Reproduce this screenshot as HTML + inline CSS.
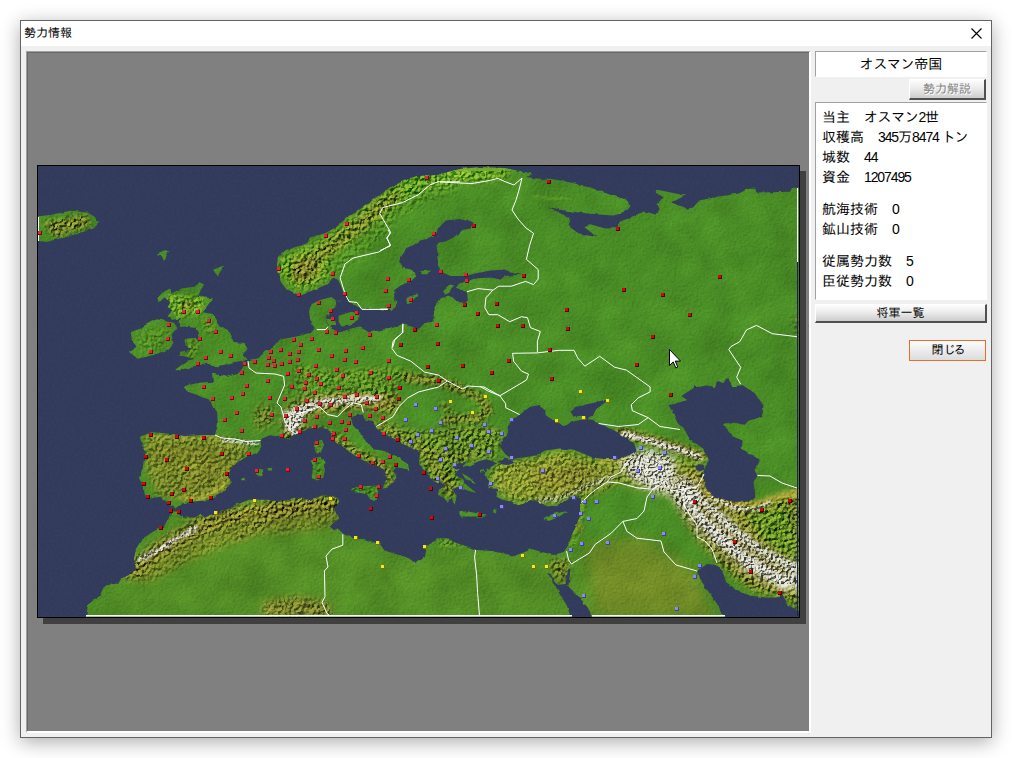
<!DOCTYPE html>
<html lang="ja"><head><meta charset="utf-8"><title>勢力情報</title>
<style>
html,body{margin:0;padding:0;background:#fff;}
body{width:1012px;height:758px;overflow:hidden;position:relative;font-family:"Liberation Sans","IPAGothic",sans-serif;color:#000;}
.abs{position:absolute;}
#win{left:20px;top:20px;width:970px;height:716px;border:1px solid #646464;background:#f0f0f0;box-shadow:0 4px 18px rgba(0,0,0,.33);}
#tbar{left:21px;top:21px;width:970px;height:25px;background:#fff;}
#ttl{left:24px;top:25px;font-size:12px;line-height:16px;white-space:nowrap;}
#panel{left:26px;top:51px;width:785px;height:682px;background:#808080;border-top:1px solid #a0a0a0;border-left:1px solid #a0a0a0;border-right:2px solid #fff;border-bottom:2px solid #fff;box-sizing:border-box;box-shadow:inset 1px 1px 0 #696969;}
#mshadow{left:43px;top:171px;width:763px;height:453px;background:#404040;}
.sunk{background:#fff;border-top:1px solid #a0a0a0;border-left:1px solid #a0a0a0;border-right:1px solid #fff;border-bottom:1px solid #fff;box-sizing:border-box;}
#name{left:815px;top:51px;width:172px;height:26px;font-size:14px;line-height:24px;text-align:center;white-space:nowrap;}
#info{left:815px;top:102px;width:172px;height:198px;font-size:14px;white-space:nowrap;}
#info div{position:absolute;left:6px;height:20px;line-height:20px;margin-top:-1px;}
.k{letter-spacing:-0.4px;}
.tn{letter-spacing:-1.2px;margin-left:3px;}
.btn{box-sizing:border-box;font-size:12px;text-align:center;white-space:nowrap;background:linear-gradient(#fdfdfd,#ececec 45%,#cdcdcd);border-top:1px solid #fff;border-left:1px solid #fff;border-right:2px solid #505050;border-bottom:2px solid #505050;}
#b1{left:909px;top:79px;width:77px;height:21px;line-height:18px;color:#848484;text-shadow:1px 1px 0 #fff;}
#b2{left:815px;top:304px;width:172px;height:19px;line-height:16px;}
#b3{left:909px;top:340px;width:77px;height:21px;line-height:19px;border:1px solid #e0702e;background:linear-gradient(#fcfcfc,#ececec 50%,#dcdcdc);}
.n{letter-spacing:-1.1px;}
</style></head><body>
<div id="win" class="abs"></div>
<div id="tbar" class="abs"></div>
<div id="ttl" class="abs">勢力情報</div>
<svg class="abs" style="left:971px;top:28px" width="11" height="11" viewBox="0 0 11 11"><path d="M0.5 0.5 L10.5 10.5 M10.5 0.5 L0.5 10.5" stroke="#000" stroke-width="1.1" fill="none"/></svg>
<div id="panel" class="abs"></div>
<div id="mshadow" class="abs"></div>
<svg width="763" height="453" viewBox="37 165 763 453" style="position:absolute;left:37px;top:165px;display:block">
<defs>
<filter id="b1" x="-20%" y="-20%" width="140%" height="140%"><feGaussianBlur stdDeviation="0.8"/></filter>
<filter id="b2" x="-20%" y="-20%" width="140%" height="140%"><feGaussianBlur stdDeviation="2"/></filter>
<filter id="b4" x="-20%" y="-20%" width="140%" height="140%"><feGaussianBlur stdDeviation="4"/></filter>
<filter id="b7" x="-20%" y="-20%" width="140%" height="140%"><feGaussianBlur stdDeviation="7"/></filter>
<filter id="emb" x="0" y="0" width="100%" height="100%" color-interpolation-filters="sRGB"><feTurbulence type="fractalNoise" baseFrequency="0.3" numOctaves="3" seed="7" result="t"/><feDiffuseLighting in="t" surfaceScale="3.6" diffuseConstant="1" lighting-color="#b2b2b2" result="l"><feDistantLight azimuth="225" elevation="45"/></feDiffuseLighting><feGaussianBlur in="SourceAlpha" stdDeviation="3" result="m"/><feComposite in="l" in2="m" operator="in"/></filter>
<filter id="emb2" x="0" y="0" width="100%" height="100%" color-interpolation-filters="sRGB"><feTurbulence type="fractalNoise" baseFrequency="0.4" numOctaves="2" seed="21" result="t"/><feDiffuseLighting in="t" surfaceScale="5" diffuseConstant="1" lighting-color="#b5b5b5" result="l"><feDistantLight azimuth="225" elevation="45"/></feDiffuseLighting><feGaussianBlur in="SourceAlpha" stdDeviation="1.5" result="m"/><feComposite in="l" in2="m" operator="in"/></filter>
<filter id="disp" filterUnits="userSpaceOnUse" x="27" y="155" width="790" height="480"><feTurbulence type="fractalNoise" baseFrequency="0.13" numOctaves="2" seed="5" result="n"/><feDisplacementMap in="SourceGraphic" in2="n" scale="3.2" xChannelSelector="R" yChannelSelector="G"/></filter>
<filter id="lf" x="0" y="0" width="100%" height="100%" color-interpolation-filters="sRGB"><feTurbulence type="fractalNoise" baseFrequency="0.03" numOctaves="3" seed="9" result="n"/><feColorMatrix in="n" type="matrix" values="1.3 0 0 0 -0.15  1.3 0 0 0 -0.15  1.3 0 0 0 -0.15  0 0 0 0 1"/></filter>
<filter id="embs" x="0" y="0" width="100%" height="100%" color-interpolation-filters="sRGB"><feTurbulence type="fractalNoise" baseFrequency="0.45" numOctaves="2" seed="11" result="t"/><feDiffuseLighting in="t" surfaceScale="1.6" diffuseConstant="1" lighting-color="#b5b5b5" result="l"><feDistantLight azimuth="225" elevation="45"/></feDiffuseLighting><feComposite in="l" in2="SourceAlpha" operator="in"/></filter>
<filter id="seatex" x="0" y="0" width="100%" height="100%"><feTurbulence type="fractalNoise" baseFrequency="0.4" numOctaves="2" seed="3" result="n"/><feColorMatrix in="n" type="matrix" values="0 0 0 0 1  0 0 0 0 1  0 0 0 0 1  1.2 0 0 0 -0.45"/></filter>
<clipPath id="landclip">
<polygon points="440.0,174.0 459.8,169.0 479.6,167.0 505.0,168.0 525.0,172.0 533.0,174.0 527.0,176.9 539.0,178.8 550.8,178.8 566.6,181.8 590.3,186.8 610.0,194.7 626.0,199.6 631.0,205.6 626.0,211.5 614.0,215.4 598.0,214.5 578.5,212.5 558.7,209.5 547.8,206.5 558.7,212.5 570.6,218.4 568.6,226.3 578.5,233.2 596.3,237.2 592.3,233.2 584.4,227.3 590.3,224.3 604.2,228.3 618.0,228.3 618.0,222.4 630.0,217.4 643.7,211.4 655.6,214.4 659.6,209.5 657.6,204.5 662.5,197.6 655.6,192.6 657.6,189.7 685.3,195.6 671.4,202.5 687.3,208.5 693.2,207.5 699.1,200.6 718.9,196.6 738.7,193.6 748.6,188.7 755.5,188.7 756.5,192.6 790.1,191.7 792.1,187.7 808.0,187.7 808.0,625.0 84.0,625.0 86.0,617.0 88.4,604.5 100.3,594.6 104.3,585.7 116.1,583.7 124.0,576.8 135.9,568.9 133.9,559.0 135.9,549.1 141.8,539.2 153.7,531.3 163.6,527.4 167.6,519.5 171.5,512.5 177.5,512.5 183.4,517.5 195.3,517.5 201.2,513.5 205.2,517.5 215.0,514.5 226.9,509.6 237.0,504.6 248.9,499.7 266.7,499.7 280.5,501.7 294.4,497.7 310.2,499.7 324.0,494.7 337.9,497.7 338.9,501.7 334.9,509.6 338.9,517.5 330.0,526.4 333.9,530.3 337.9,528.4 343.8,534.3 353.7,538.2 365.6,539.2 379.4,544.2 383.4,550.1 395.3,554.1 407.1,557.0 417.0,563.0 424.9,557.0 426.9,547.2 431.9,541.2 437.0,538.2 446.9,538.2 456.8,543.2 466.7,546.2 476.6,550.1 492.4,551.1 506.2,554.1 514.2,556.0 522.1,553.1 532.0,549.1 541.8,552.1 553.7,555.1 563.6,552.1 567.6,546.2 571.5,535.3 575.5,527.4 579.4,517.5 581.0,509.6 581.0,498.0 573.2,496.9 563.6,502.0 555.7,505.6 547.8,506.6 539.9,502.5 530.0,500.0 524.0,503.6 518.1,505.6 512.2,501.7 502.3,499.7 496.3,496.8 498.3,488.9 488.4,488.0 490.3,481.0 484.4,475.1 486.4,469.1 496.3,464.2 498.3,463.2 486.4,459.2 478.5,461.2 470.6,465.2 462.7,467.2 466.6,463.2 458.7,463.2 452.8,467.2 458.7,469.1 454.7,475.1 462.7,479.0 466.6,485.0 476.5,492.9 468.6,490.9 458.7,486.9 452.8,488.9 456.7,496.8 454.7,504.7 450.8,496.8 447.8,502.8 444.8,498.8 437.9,494.8 438.9,488.9 446.8,485.0 436.9,483.0 433.0,479.0 425.1,471.1 419.1,465.2 419.5,452.0 410.8,447.8 397.5,440.4 382.6,433.0 376.7,428.5 372.3,421.1 364.9,419.6 362.6,414.5 356.0,415.2 350.8,417.4 353.0,425.6 360.4,433.0 366.3,440.4 373.8,449.3 384.1,450.8 388.6,453.7 398.9,458.2 407.8,464.1 409.3,470.0 403.4,468.6 396.0,467.1 393.0,471.5 397.5,476.0 393.0,481.9 388.6,486.3 382.6,487.8 387.1,477.5 384.1,470.0 376.7,465.6 367.8,462.6 358.9,458.2 350.0,452.3 341.1,446.3 335.2,441.9 330.8,434.5 327.8,429.3 318.9,427.1 308.5,428.5 299.6,433.0 293.7,434.5 289.3,438.9 280.4,437.4 270.0,435.2 266.4,435.1 260.5,440.0 261.4,446.9 256.5,452.9 246.6,456.8 236.7,462.8 230.8,468.7 227.8,476.6 231.9,481.9 223.0,491.8 211.0,499.7 193.3,501.7 181.4,503.6 175.5,508.6 171.5,506.6 167.6,502.6 159.6,496.7 149.8,498.7 144.8,495.7 143.8,486.8 138.9,478.0 141.8,470.0 142.7,468.7 143.7,460.8 145.7,450.9 141.8,444.0 139.8,437.0 151.7,432.1 171.4,434.1 185.3,436.0 203.0,435.1 215.0,435.1 217.9,423.2 216.9,411.3 211.0,405.4 209.0,399.5 199.1,395.5 187.3,391.5 183.3,386.6 195.2,383.6 203.0,382.6 213.0,381.7 212.0,373.7 218.9,374.7 226.8,376.7 238.7,373.7 242.6,367.8 246.6,361.9 258.5,357.9 266.4,350.0 270.3,350.8 276.3,342.9 282.2,338.9 294.1,336.9 303.0,335.0 310.0,332.5 314.8,328.6 310.0,320.0 309.0,310.0 311.9,304.0 319.8,300.0 331.7,296.9 334.6,299.9 349.0,301.5 345.0,293.6 343.1,291.6 339.1,281.7 334.2,277.8 328.2,283.7 317.4,288.6 299.6,295.6 285.7,288.6 280.8,281.7 276.8,269.8 277.8,258.0 285.7,250.0 305.5,244.0 311.4,237.2 325.3,233.2 337.2,226.3 347.0,217.4 362.9,207.5 376.7,196.7 396.5,183.8 416.3,175.9 438.0,174.9"/>
<polygon points="30.0,217.0 50.0,215.0 60.0,213.0 71.0,210.7 80.0,211.5 88.0,212.7 95.0,217.0 99.0,221.7 95.0,226.0 91.7,229.0 80.0,233.0 68.6,236.6 58.0,239.0 48.0,242.0 30.0,240.0"/>
<polygon points="156.6,253.8 163.0,251.0 169.5,249.9 166.5,255.8 164.5,261.8 161.5,255.8"/>
<polygon points="213.0,269.7 222.9,265.7 220.9,271.7 217.9,276.6 215.0,272.6"/>
<polygon points="181.3,288.5 196.2,286.5 199.1,282.0 204.0,284.5 201.0,289.5 198.0,296.4 213.0,298.4 207.0,306.3 203.0,312.2 213.0,314.2 219.0,325.0 227.8,330.0 233.7,342.9 244.6,343.9 247.6,348.8 242.6,354.7 246.6,359.7 236.7,361.7 227.8,363.6 217.0,366.6 207.0,363.6 199.0,366.6 185.3,368.6 176.4,371.5 175.4,369.6 187.3,360.7 195.2,358.7 188.2,356.7 179.3,355.7 181.3,351.8 190.2,349.8 185.3,343.9 184.3,338.9 193.2,337.9 198.1,339.9 199.1,333.0 195.2,327.0 188.2,326.0 181.3,327.0 178.4,322.1 181.3,318.1 172.4,320.1 167.5,316.2 172.4,310.2 167.5,307.3 170.4,302.3 164.5,297.4 159.6,302.3 157.2,298.4 162.5,292.4 170.4,288.5 171.4,293.4"/>
<polygon points="154.6,319.1 165.5,321.1 173.4,323.1 177.4,329.0 171.4,333.0 173.4,342.9 167.5,349.8 154.6,354.7 137.8,358.7 128.9,351.8 136.8,346.8 131.9,340.9 130.9,332.0 138.8,329.0 143.7,325.1"/>
<polygon points="254.5,472.0 259.0,468.7 264.4,470.0 262.0,476.6 257.0,475.0"/>
<polygon points="267.4,468.0 272.3,467.7 272.0,470.7 268.0,470.5"/>
<polygon points="241.7,479.0 245.0,477.6 246.6,480.0 243.0,480.6"/>
<polygon points="314.5,441.9 321.9,439.7 324.1,444.8 321.1,452.3 317.4,454.5 313.7,449.3"/>
<polygon points="310.0,459.7 320.4,456.7 325.6,461.1 324.8,470.0 323.4,477.5 317.4,480.4 311.5,477.5 313.0,468.6"/>
<polygon points="350.8,489.3 358.9,486.3 379.7,485.6 378.2,492.3 376.7,499.7 370.8,499.7 364.9,493.7 354.5,492.3"/>
<polygon points="458.8,512.5 466.7,511.3 476.0,513.0 486.5,514.5 484.5,516.5 470.0,516.5 460.7,516.5"/>
<polygon points="493.0,510.0 495.5,509.5 495.0,513.5 493.5,513.0"/>
<polygon points="543.5,517.7 553.4,513.7 567.3,510.8 559.3,516.7 549.5,520.7 544.5,520.0"/>
<polygon points="338.6,315.7 351.4,311.8 359.3,313.7 359.3,319.7 349.5,325.6 341.5,326.6 338.6,321.7"/>
<polygon points="326.0,319.0 335.0,319.0 336.0,326.0 329.0,326.0"/>
<polygon points="420.4,271.1 429.8,270.4 427.5,274.3 422.7,274.3"/>
<polygon points="406.1,298.8 417.2,293.3 418.0,295.0 410.0,303.6 407.0,304.0"/>
<polygon points="389.5,309.1 395.8,299.6 396.6,302.8 391.9,311.5"/>
<polygon points="443.3,290.1 449.6,284.6 454.4,285.4 451.2,288.6 449.6,292.5 444.9,294.9"/>
<polygon points="545.3,408.7 557.2,409.7 570.2,410.9 573.2,416.8 581.1,415.8 587.0,418.8 575.2,420.8 563.3,425.7 557.4,421.8 549.5,417.8 545.5,414.8"/>
<polygon points="462.0,473.0 470.0,478.0 476.0,484.0 472.0,483.0 464.0,477.0"/>
<polygon points="480.0,470.0 484.0,469.0 484.0,472.0 480.0,472.5"/>
<polygon points="428.0,473.0 431.0,476.0 433.0,480.0 430.0,478.0"/>
</clipPath></defs>
<g filter="url(#disp)">
<rect x="27" y="155" width="790" height="480" fill="#323a5b"/>
<g clip-path="url(#landclip)">
<rect x="37" y="165" width="764" height="453" fill="#498c25"/>
<polygon points="86.0,617.0 120.0,570.0 160.0,525.0 240.0,505.0 340.0,500.0 345.0,540.0 440.0,545.0 560.0,555.0 600.0,560.0 700.0,575.0 720.0,617.0" fill="#5c8e26" filter="url(#b7)" opacity="0.55"/>
<polygon points="585.0,545.0 640.0,536.0 690.0,565.0 715.0,617.0 596.0,617.0" fill="#7c8828" filter="url(#b7)" opacity="0.7"/>
<polyline points="284.0,268.0 300.0,260.0 325.0,248.0 350.0,232.0 372.0,212.0 398.0,193.0 425.0,181.0 455.0,174.0 500.0,171.0" fill="none" stroke="#80b22c" stroke-width="18" stroke-linecap="round" stroke-linejoin="round" filter="url(#b4)" opacity="0.9"/>
<polygon points="282.0,258.0 300.0,250.0 322.0,246.0 332.0,262.0 326.0,280.0 306.0,290.0 290.0,286.0" fill="#80b22c" filter="url(#b4)" opacity="0.8"/>
<polyline points="296.0,274.0 312.0,262.0 335.0,245.0 360.0,226.0 380.0,208.0 398.0,196.0" fill="none" stroke="#7e8629" stroke-width="9" stroke-linecap="round" stroke-linejoin="round" filter="url(#b4)" opacity="0.95"/>
<polygon points="290.0,262.0 312.0,256.0 322.0,268.0 312.0,282.0 296.0,284.0" fill="#928a30" filter="url(#b4)" opacity="0.8"/>
<polyline points="335.0,268.0 352.0,252.0 375.0,236.0 392.0,214.0 420.0,196.0 450.0,186.0" fill="none" stroke="#5e9a26" stroke-width="14" stroke-linecap="round" stroke-linejoin="round" filter="url(#b4)" opacity="0.6"/>
<polyline points="300.0,270.0 318.0,256.0 340.0,240.0 362.0,222.0 384.0,204.0" fill="none" stroke="#7e8629" stroke-width="14" stroke-linecap="round" stroke-linejoin="round" filter="url(#b4)" opacity="0.5"/>
<polygon points="166.0,294.0 206.0,298.0 200.0,313.0 174.0,317.0" fill="#80b22c" filter="url(#b2)" opacity="0.85"/>
<polygon points="178.0,300.0 198.0,301.0 195.0,309.0 180.0,310.0" fill="#7e8629" filter="url(#b2)" opacity="0.6"/>
<polygon points="42.0,222.0 86.0,214.0 92.0,226.0 55.0,238.0" fill="#7e8629" filter="url(#b2)" opacity="0.85"/>
<polygon points="186.0,340.0 198.0,342.0 196.0,356.0 186.0,354.0" fill="#6e9c28" filter="url(#b2)" opacity="0.7"/>
<polygon points="200.0,318.0 212.0,320.0 216.0,334.0 206.0,334.0" fill="#6e9c28" filter="url(#b2)" opacity="0.5"/>
<polygon points="136.0,332.0 170.0,326.0 168.0,348.0 140.0,354.0" fill="#6e9c28" filter="url(#b2)" opacity="0.3"/>
<polygon points="144.0,436.0 215.0,437.0 252.0,446.0 240.0,466.0 228.0,488.0 200.0,499.0 158.0,497.0 146.0,470.0" fill="#808a2a" filter="url(#b4)" opacity="0.9"/>
<polyline points="160.0,452.0 200.0,454.0 215.0,470.0 190.0,482.0" fill="none" stroke="#8f8a2c" stroke-width="10" stroke-linecap="round" stroke-linejoin="round" filter="url(#b4)" opacity="0.6"/>
<polyline points="146.0,440.0 175.0,437.0 215.0,440.0 246.0,448.0" fill="none" stroke="#bcb23c" stroke-width="4" stroke-linecap="round" stroke-linejoin="round" filter="url(#b2)" opacity="0.5"/>
<polyline points="165.0,470.0 190.0,466.0 205.0,462.0" fill="none" stroke="#bcb23c" stroke-width="3" stroke-linecap="round" stroke-linejoin="round" filter="url(#b2)" opacity="0.5"/>
<polyline points="228.0,470.0 222.0,486.0 205.0,497.0 185.0,499.0" fill="none" stroke="#bcb23c" stroke-width="4" stroke-linecap="round" stroke-linejoin="round" filter="url(#b2)" opacity="0.6"/>
<polyline points="180.0,498.0 210.0,495.0 226.0,485.0" fill="none" stroke="#bcb23c" stroke-width="4" stroke-linecap="round" stroke-linejoin="round" filter="url(#b2)" opacity="0.8"/>
<polyline points="222.0,440.0 240.0,442.0 257.0,444.0" fill="none" stroke="#efefe6" stroke-width="3" stroke-linecap="round" stroke-linejoin="round" filter="url(#b1)" opacity="0.9"/>
<polyline points="150.0,436.0 200.0,438.0 218.0,438.0" fill="none" stroke="#bcb23c" stroke-width="4" stroke-linecap="round" stroke-linejoin="round" filter="url(#b2)" opacity="0.6"/>
<polygon points="254.0,408.0 272.0,404.0 272.0,426.0 256.0,430.0" fill="#7e8629" filter="url(#b4)" opacity="0.8"/>
<polyline points="296.0,368.0 330.0,378.0 360.0,374.0 390.0,370.0 410.0,376.0" fill="none" stroke="#6e9c28" stroke-width="7" stroke-linecap="round" stroke-linejoin="round" filter="url(#b4)" opacity="0.9"/>
<polyline points="355.0,380.0 385.0,392.0" fill="none" stroke="#6e9c28" stroke-width="5" stroke-linecap="round" stroke-linejoin="round" filter="url(#b4)" opacity="0.8"/>
<polyline points="285.0,385.0 290.0,400.0" fill="none" stroke="#6e9c28" stroke-width="5" stroke-linecap="round" stroke-linejoin="round" filter="url(#b4)" opacity="0.7"/>
<polygon points="300.0,366.0 340.0,372.0 380.0,368.0 400.0,372.0 398.0,392.0 370.0,398.0 340.0,394.0 305.0,398.0 292.0,390.0" fill="#6a9a28" filter="url(#b4)" opacity="0.6"/>
<polyline points="372.0,386.0 384.0,380.0 396.0,384.0 392.0,394.0 380.0,396.0" fill="none" stroke="#7e8629" stroke-width="3" stroke-linecap="round" stroke-linejoin="round" filter="url(#b2)" opacity="0.6"/>
<polyline points="292.0,434.0 290.0,420.0 298.0,410.0 315.0,405.0 335.0,402.0 355.0,399.0 372.0,400.0 390.0,404.0" fill="none" stroke="#928a30" stroke-width="19" stroke-linecap="round" stroke-linejoin="round" filter="url(#b4)" opacity="0.9"/>
<polygon points="285.0,412.0 297.0,407.0 305.0,412.0 301.0,426.0 297.0,435.0 288.0,433.0 284.0,422.0" fill="#efefe6" filter="url(#b2)" opacity="0.92"/>
<polyline points="298.0,410.0 310.0,405.0 325.0,402.0 340.0,401.0 355.0,399.0 368.0,398.0 378.0,398.0" fill="none" stroke="#efefe6" stroke-width="7" stroke-linecap="round" stroke-linejoin="round" filter="url(#b2)" opacity="0.95"/>
<polyline points="300.0,414.0 312.0,410.0" fill="none" stroke="#efefe6" stroke-width="4" stroke-linecap="round" stroke-linejoin="round" filter="url(#b1)" opacity="0.8"/>
<polyline points="305.0,430.0 322.0,432.0 340.0,440.0 356.0,452.0 372.0,460.0 386.0,470.0 390.0,482.0" fill="none" stroke="#7e8629" stroke-width="9" stroke-linecap="round" stroke-linejoin="round" filter="url(#b2)" opacity="0.85"/>
<polyline points="352.0,490.0 376.0,490.0" fill="none" stroke="#7e8629" stroke-width="6" stroke-linecap="round" stroke-linejoin="round" filter="url(#b2)" opacity="0.7"/>
<polyline points="317.0,445.0 318.0,452.0" fill="none" stroke="#7e8629" stroke-width="4" stroke-linecap="round" stroke-linejoin="round" filter="url(#b2)" opacity="0.7"/>
<polyline points="318.0,462.0 318.0,476.0" fill="none" stroke="#7e8629" stroke-width="5" stroke-linecap="round" stroke-linejoin="round" filter="url(#b2)" opacity="0.7"/>
<polygon points="375.0,420.0 395.0,425.0 420.0,432.0 445.0,428.0 470.0,426.0 500.0,430.0 505.0,440.0 495.0,452.0 500.0,460.0 480.0,458.0 465.0,462.0 455.0,470.0 462.0,480.0 455.0,495.0 445.0,498.0 435.0,485.0 422.0,468.0 418.0,452.0 400.0,442.0 380.0,432.0" fill="#86962e" filter="url(#b4)" opacity="0.6"/>
<polyline points="372.0,424.0 390.0,433.0 408.0,442.0 424.0,452.0 434.0,464.0 444.0,478.0 452.0,492.0" fill="none" stroke="#928a30" stroke-width="9" stroke-linecap="round" stroke-linejoin="round" filter="url(#b4)" opacity="0.6"/>
<polyline points="432.0,450.0 445.0,458.0 462.0,460.0 480.0,456.0" fill="none" stroke="#928a30" stroke-width="7" stroke-linecap="round" stroke-linejoin="round" filter="url(#b4)" opacity="0.55"/>
<polyline points="450.0,430.0 475.0,428.0 500.0,432.0" fill="none" stroke="#928a30" stroke-width="4" stroke-linecap="round" stroke-linejoin="round" filter="url(#b2)" opacity="0.5"/>
<polyline points="406.0,377.0 425.0,380.0 440.0,381.0 462.0,389.0 480.0,398.0 489.0,410.0 478.0,419.0 460.0,418.0 445.0,420.0" fill="none" stroke="#7e8629" stroke-width="9" stroke-linecap="round" stroke-linejoin="round" filter="url(#b2)" opacity="0.85"/>
<polyline points="412.0,380.0 435.0,382.0" fill="none" stroke="#bcb23c" stroke-width="4" stroke-linecap="round" stroke-linejoin="round" filter="url(#b2)" opacity="0.5"/>
<polyline points="442.0,404.0 450.0,412.0" fill="none" stroke="#7e8629" stroke-width="6" stroke-linecap="round" stroke-linejoin="round" filter="url(#b2)" opacity="0.7"/>
<polygon points="504.0,462.0 540.0,456.0 562.0,450.0 600.0,460.0 640.0,452.0 700.0,462.0 705.0,500.0 660.0,494.0 620.0,482.0 585.0,498.0 545.0,504.0 512.0,502.0 492.0,488.0 490.0,470.0" fill="#949c32" filter="url(#b4)" opacity="0.9"/>
<polygon points="530.0,470.0 580.0,466.0 600.0,474.0 570.0,488.0 535.0,488.0" fill="#928a30" filter="url(#b4)" opacity="0.6"/>
<polyline points="540.0,500.0 560.0,497.0 585.0,487.0 612.0,477.0" fill="none" stroke="#efefe6" stroke-width="4" stroke-linecap="round" stroke-linejoin="round" filter="url(#b2)" opacity="0.55"/>
<polygon points="620.0,456.0 650.0,450.0 672.0,456.0 680.0,478.0 676.0,494.0 655.0,492.0 636.0,482.0 622.0,470.0" fill="#efefe6" filter="url(#b4)" opacity="0.85"/>
<polygon points="634.0,462.0 660.0,460.0 668.0,480.0 650.0,484.0" fill="#efefe6" filter="url(#b2)" opacity="0.7"/>
<polyline points="600.0,462.0 625.0,458.0" fill="none" stroke="#bcb23c" stroke-width="5" stroke-linecap="round" stroke-linejoin="round" filter="url(#b2)" opacity="0.8"/>
<polyline points="620.0,432.0 650.0,440.0 680.0,449.0 702.0,457.0" fill="none" stroke="#928a30" stroke-width="11" stroke-linecap="round" stroke-linejoin="round" filter="url(#b2)" opacity="0.9"/>
<polyline points="624.0,434.0 650.0,441.0 680.0,450.0 700.0,457.0" fill="none" stroke="#efefe6" stroke-width="5" stroke-linecap="round" stroke-linejoin="round" filter="url(#b1)" opacity="0.95"/>
<polygon points="672.0,480.0 700.0,470.0 760.0,505.0 800.0,490.0 800.0,617.0 790.0,600.0 750.0,590.0 720.0,565.0 690.0,530.0 676.0,505.0" fill="#928a30" filter="url(#b4)" opacity="0.85"/>
<polyline points="683.0,490.0 700.0,510.0 725.0,535.0 755.0,560.0 790.0,578.0" fill="none" stroke="#efefe6" stroke-width="26" stroke-linecap="round" stroke-linejoin="round" filter="url(#b4)" opacity="0.8"/>
<polyline points="684.0,490.0 698.0,512.0 720.0,538.0 750.0,563.0 786.0,584.0" fill="none" stroke="#efefe6" stroke-width="8" stroke-linecap="round" stroke-linejoin="round" filter="url(#b2)" opacity="0.85"/>
<polyline points="696.0,496.0 716.0,516.0 742.0,538.0 772.0,556.0 796.0,566.0" fill="none" stroke="#efefe6" stroke-width="7" stroke-linecap="round" stroke-linejoin="round" filter="url(#b2)" opacity="0.8"/>
<polyline points="700.0,506.0 724.0,530.0 752.0,552.0 784.0,572.0" fill="none" stroke="#928a30" stroke-width="4" stroke-linecap="round" stroke-linejoin="round" filter="url(#b2)" opacity="0.7"/>
<polyline points="708.0,494.0 730.0,504.0 750.0,507.0 775.0,498.0 798.0,492.0" fill="none" stroke="#bcb23c" stroke-width="7" stroke-linecap="round" stroke-linejoin="round" filter="url(#b2)" opacity="0.9"/>
<polyline points="712.0,498.0 732.0,507.0 752.0,510.0 770.0,503.0" fill="none" stroke="#efefe6" stroke-width="4" stroke-linecap="round" stroke-linejoin="round" filter="url(#b1)" opacity="0.85"/>
<polygon points="745.0,515.0 790.0,505.0 798.0,560.0 770.0,545.0" fill="#6e9c28" filter="url(#b4)" opacity="0.8"/>
<polyline points="583.0,500.0 580.0,515.0 576.0,530.0 572.0,545.0" fill="none" stroke="#80b22c" stroke-width="5" stroke-linecap="round" stroke-linejoin="round" filter="url(#b2)" opacity="0.8"/>
<polyline points="578.0,522.0 582.0,534.0" fill="none" stroke="#928a30" stroke-width="4" stroke-linecap="round" stroke-linejoin="round" filter="url(#b2)" opacity="0.8"/>
<polygon points="548.0,560.0 570.0,558.0 567.0,584.0 556.0,580.0" fill="#7e8629" filter="url(#b2)" opacity="0.7"/>
<polygon points="438.0,538.0 460.0,540.0 462.0,548.0 440.0,548.0" fill="#6e9c28" filter="url(#b2)" opacity="0.5"/>
<polygon points="128.0,578.0 150.0,552.0 178.0,532.0 215.0,516.0 260.0,505.0 335.0,500.0 338.0,524.0 300.0,532.0 250.0,536.0 215.0,550.0 180.0,566.0 150.0,582.0" fill="#868a2c" filter="url(#b4)" opacity="0.7"/>
<polyline points="132.0,572.0 150.0,556.0 175.0,540.0 198.0,528.0 230.0,516.0 270.0,508.0 335.0,503.0" fill="none" stroke="#928a30" stroke-width="16" stroke-linecap="round" stroke-linejoin="round" filter="url(#b4)" opacity="0.8"/>
<polyline points="140.0,560.0 158.0,550.0 178.0,538.0 196.0,528.0" fill="none" stroke="#efefe6" stroke-width="4" stroke-linecap="round" stroke-linejoin="round" filter="url(#b1)" opacity="0.9"/>
<polyline points="237.0,538.0 262.0,522.0 290.0,512.0" fill="none" stroke="#928a30" stroke-width="7" stroke-linecap="round" stroke-linejoin="round" filter="url(#b4)" opacity="0.7"/>
<polyline points="180.0,515.0 205.0,520.0 225.0,514.0" fill="none" stroke="#7e8629" stroke-width="5" stroke-linecap="round" stroke-linejoin="round" filter="url(#b2)" opacity="0.6"/>
<polygon points="262.0,602.0 300.0,596.0 332.0,604.0 332.0,617.0 262.0,617.0" fill="#928a30" filter="url(#b4)" opacity="0.8"/>
<polyline points="796.0,318.0 798.0,335.0" fill="none" stroke="#7e8629" stroke-width="5" stroke-linecap="round" stroke-linejoin="round" filter="url(#b2)" opacity="0.7"/>
<polyline points="533.0,196.0 548.0,198.0 570.0,199.0" fill="none" stroke="#80b22c" stroke-width="2" stroke-linecap="round" stroke-linejoin="round" filter="url(#b1)" opacity="0.6"/>
<rect x="37" y="165" width="764" height="453" fill="#000" filter="url(#embs)" style="mix-blend-mode:overlay" opacity="0.17"/>
<rect x="27" y="155" width="790" height="480" filter="url(#lf)" style="mix-blend-mode:overlay" opacity="0.12"/>
<g filter="url(#emb)" style="mix-blend-mode:overlay" opacity="1"><polyline points="284.0,268.0 300.0,260.0 325.0,248.0 350.0,232.0 372.0,212.0 398.0,193.0 425.0,181.0 455.0,174.0 500.0,171.0" fill="none" stroke="#000" stroke-width="18" stroke-linecap="round" stroke-linejoin="round" opacity="1"/>
<polygon points="282.0,258.0 300.0,250.0 322.0,246.0 332.0,262.0 326.0,280.0 306.0,290.0 290.0,286.0" fill="#000" opacity="1"/>
<polyline points="335.0,268.0 352.0,252.0 375.0,236.0 392.0,214.0 420.0,196.0 450.0,186.0" fill="none" stroke="#000" stroke-width="14" stroke-linecap="round" stroke-linejoin="round" opacity="0.45"/>
<polygon points="166.0,294.0 206.0,298.0 200.0,313.0 174.0,317.0" fill="#000" opacity="1"/>
<polygon points="42.0,222.0 86.0,214.0 92.0,226.0 55.0,238.0" fill="#000" opacity="1"/>
<polygon points="186.0,340.0 198.0,342.0 196.0,356.0 186.0,354.0" fill="#000" opacity="0.7"/>
<polygon points="200.0,318.0 212.0,320.0 216.0,334.0 206.0,334.0" fill="#000" opacity="0.6"/>
<polygon points="136.0,332.0 170.0,326.0 168.0,348.0 140.0,354.0" fill="#000" opacity="0.4"/>
<polygon points="144.0,436.0 215.0,437.0 252.0,446.0 240.0,466.0 228.0,488.0 200.0,499.0 158.0,497.0 146.0,470.0" fill="#000" opacity="0.55"/>
<polyline points="146.0,440.0 175.0,437.0 215.0,440.0 246.0,448.0" fill="none" stroke="#000" stroke-width="4" stroke-linecap="round" stroke-linejoin="round" opacity="0.8"/>
<polyline points="165.0,470.0 190.0,466.0 205.0,462.0" fill="none" stroke="#000" stroke-width="3" stroke-linecap="round" stroke-linejoin="round" opacity="0.8"/>
<polyline points="228.0,470.0 222.0,486.0 205.0,497.0 185.0,499.0" fill="none" stroke="#000" stroke-width="4" stroke-linecap="round" stroke-linejoin="round" opacity="0.8"/>
<polygon points="254.0,408.0 272.0,404.0 272.0,426.0 256.0,430.0" fill="#000" opacity="0.8"/>
<polyline points="296.0,368.0 330.0,378.0 360.0,374.0 390.0,370.0 410.0,376.0" fill="none" stroke="#000" stroke-width="7" stroke-linecap="round" stroke-linejoin="round" opacity="0.7"/>
<polyline points="355.0,380.0 385.0,392.0" fill="none" stroke="#000" stroke-width="5" stroke-linecap="round" stroke-linejoin="round" opacity="0.6"/>
<polyline points="285.0,385.0 290.0,400.0" fill="none" stroke="#000" stroke-width="5" stroke-linecap="round" stroke-linejoin="round" opacity="0.6"/>
<polygon points="300.0,366.0 340.0,372.0 380.0,368.0 400.0,372.0 398.0,392.0 370.0,398.0 340.0,394.0 305.0,398.0 292.0,390.0" fill="#000" opacity="0.55"/>
<polyline points="372.0,386.0 384.0,380.0 396.0,384.0 392.0,394.0 380.0,396.0" fill="none" stroke="#000" stroke-width="3" stroke-linecap="round" stroke-linejoin="round" opacity="0.7"/>
<polyline points="292.0,434.0 290.0,420.0 298.0,410.0 315.0,405.0 335.0,402.0 355.0,399.0 372.0,400.0 390.0,404.0" fill="none" stroke="#000" stroke-width="19" stroke-linecap="round" stroke-linejoin="round" opacity="1"/>
<polyline points="305.0,430.0 322.0,432.0 340.0,440.0 356.0,452.0 372.0,460.0 386.0,470.0 390.0,482.0" fill="none" stroke="#000" stroke-width="9" stroke-linecap="round" stroke-linejoin="round" opacity="1"/>
<polyline points="352.0,490.0 376.0,490.0" fill="none" stroke="#000" stroke-width="6" stroke-linecap="round" stroke-linejoin="round" opacity="0.9"/>
<polyline points="317.0,445.0 318.0,452.0" fill="none" stroke="#000" stroke-width="4" stroke-linecap="round" stroke-linejoin="round" opacity="0.9"/>
<polyline points="318.0,462.0 318.0,476.0" fill="none" stroke="#000" stroke-width="5" stroke-linecap="round" stroke-linejoin="round" opacity="0.9"/>
<polygon points="375.0,420.0 395.0,425.0 420.0,432.0 445.0,428.0 470.0,426.0 500.0,430.0 505.0,440.0 495.0,452.0 500.0,460.0 480.0,458.0 465.0,462.0 455.0,470.0 462.0,480.0 455.0,495.0 445.0,498.0 435.0,485.0 422.0,468.0 418.0,452.0 400.0,442.0 380.0,432.0" fill="#000" opacity="0.9"/>
<polyline points="406.0,377.0 425.0,380.0 440.0,381.0 462.0,389.0 480.0,398.0 489.0,410.0 478.0,419.0 460.0,418.0 445.0,420.0" fill="none" stroke="#000" stroke-width="9" stroke-linecap="round" stroke-linejoin="round" opacity="1"/>
<polyline points="442.0,404.0 450.0,412.0" fill="none" stroke="#000" stroke-width="6" stroke-linecap="round" stroke-linejoin="round" opacity="0.8"/>
<polygon points="504.0,462.0 540.0,456.0 562.0,450.0 600.0,460.0 640.0,452.0 700.0,462.0 705.0,500.0 660.0,494.0 620.0,482.0 585.0,498.0 545.0,504.0 512.0,502.0 492.0,488.0 490.0,470.0" fill="#000" opacity="0.8"/>
<polyline points="620.0,432.0 650.0,440.0 680.0,449.0 702.0,457.0" fill="none" stroke="#000" stroke-width="11" stroke-linecap="round" stroke-linejoin="round" opacity="1"/>
<polygon points="672.0,480.0 700.0,470.0 760.0,505.0 800.0,490.0 800.0,617.0 790.0,600.0 750.0,590.0 720.0,565.0 690.0,530.0 676.0,505.0" fill="#000" opacity="1"/>
<polyline points="583.0,500.0 580.0,515.0 576.0,530.0 572.0,545.0" fill="none" stroke="#000" stroke-width="5" stroke-linecap="round" stroke-linejoin="round" opacity="0.9"/>
<polygon points="548.0,560.0 570.0,558.0 567.0,584.0 556.0,580.0" fill="#000" opacity="0.8"/>
<polygon points="438.0,538.0 460.0,540.0 462.0,548.0 440.0,548.0" fill="#000" opacity="0.7"/>
<polygon points="128.0,578.0 150.0,552.0 178.0,532.0 215.0,516.0 260.0,505.0 335.0,500.0 338.0,524.0 300.0,532.0 250.0,536.0 215.0,550.0 180.0,566.0 150.0,582.0" fill="#000" opacity="0.5"/>
<polyline points="132.0,572.0 150.0,556.0 175.0,540.0 198.0,528.0 230.0,516.0 270.0,508.0 335.0,503.0" fill="none" stroke="#000" stroke-width="16" stroke-linecap="round" stroke-linejoin="round" opacity="1"/>
<polyline points="237.0,538.0 262.0,522.0 290.0,512.0" fill="none" stroke="#000" stroke-width="7" stroke-linecap="round" stroke-linejoin="round" opacity="0.7"/>
<polyline points="180.0,515.0 205.0,520.0 225.0,514.0" fill="none" stroke="#000" stroke-width="5" stroke-linecap="round" stroke-linejoin="round" opacity="0.8"/>
<polygon points="262.0,602.0 300.0,596.0 332.0,604.0 332.0,617.0 262.0,617.0" fill="#000" opacity="0.7"/>
<polyline points="796.0,318.0 798.0,335.0" fill="none" stroke="#000" stroke-width="5" stroke-linecap="round" stroke-linejoin="round" opacity="0.7"/>
<polyline points="533.0,196.0 548.0,198.0 570.0,199.0" fill="none" stroke="#000" stroke-width="2" stroke-linecap="round" stroke-linejoin="round" opacity="0.5"/></g>
<g filter="url(#emb2)" style="mix-blend-mode:hard-light" opacity="0.75"><polyline points="222.0,440.0 240.0,442.0 257.0,444.0" fill="none" stroke="#000" stroke-width="5" stroke-linecap="round" stroke-linejoin="round"/>
<polygon points="285.0,412.0 297.0,407.0 305.0,412.0 301.0,426.0 297.0,435.0 288.0,433.0 284.0,422.0" fill="#000"/>
<polyline points="298.0,410.0 310.0,405.0 325.0,402.0 340.0,401.0 355.0,399.0 368.0,398.0 378.0,398.0" fill="none" stroke="#000" stroke-width="9" stroke-linecap="round" stroke-linejoin="round"/>
<polyline points="300.0,414.0 312.0,410.0" fill="none" stroke="#000" stroke-width="6" stroke-linecap="round" stroke-linejoin="round"/>
<polyline points="540.0,500.0 560.0,497.0 585.0,487.0 612.0,477.0" fill="none" stroke="#000" stroke-width="6" stroke-linecap="round" stroke-linejoin="round"/>
<polygon points="620.0,456.0 650.0,450.0 672.0,456.0 680.0,478.0 676.0,494.0 655.0,492.0 636.0,482.0 622.0,470.0" fill="#000"/>
<polygon points="634.0,462.0 660.0,460.0 668.0,480.0 650.0,484.0" fill="#000"/>
<polyline points="624.0,434.0 650.0,441.0 680.0,450.0 700.0,457.0" fill="none" stroke="#000" stroke-width="7" stroke-linecap="round" stroke-linejoin="round"/>
<polyline points="683.0,490.0 700.0,510.0 725.0,535.0 755.0,560.0 790.0,578.0" fill="none" stroke="#000" stroke-width="28" stroke-linecap="round" stroke-linejoin="round"/>
<polyline points="684.0,490.0 698.0,512.0 720.0,538.0 750.0,563.0 786.0,584.0" fill="none" stroke="#000" stroke-width="10" stroke-linecap="round" stroke-linejoin="round"/>
<polyline points="696.0,496.0 716.0,516.0 742.0,538.0 772.0,556.0 796.0,566.0" fill="none" stroke="#000" stroke-width="9" stroke-linecap="round" stroke-linejoin="round"/>
<polyline points="712.0,498.0 732.0,507.0 752.0,510.0 770.0,503.0" fill="none" stroke="#000" stroke-width="6" stroke-linecap="round" stroke-linejoin="round"/>
<polyline points="140.0,560.0 158.0,550.0 178.0,538.0 196.0,528.0" fill="none" stroke="#000" stroke-width="6" stroke-linecap="round" stroke-linejoin="round"/></g>
</g>
<polygon points="334.6,299.9 335.6,306.8 329.7,313.7 325.7,319.7 328.7,326.6 339.6,332.5 351.4,328.6 359.3,326.6 369.2,332.5 383.1,329.6 389.5,328.9 402.2,324.2 411.7,326.5 418.0,329.7 424.3,323.4 432.2,321.8 434.6,318.6 434.6,306.0 440.1,298.0 451.2,296.5 457.5,301.2 463.9,303.6 467.8,299.6 467.0,291.7 456.0,287.8 459.1,283.8 468.6,280.6 478.1,278.3 490.8,277.5 500.3,279.8 505.0,275.9 516.1,275.1 522.4,275.1 511.4,272.7 505.0,269.6 490.8,270.4 478.1,272.7 465.5,275.9 451.2,275.9 440.9,271.1 437.8,264.8 438.6,253.7 435.4,247.4 438.6,242.7 446.5,241.1 456.0,236.3 462.3,230.0 471.7,228.3 473.6,222.4 463.7,218.4 446.0,220.4 438.0,228.3 436.0,234.2 422.2,241.2 406.4,248.0 400.5,258.0 399.0,261.7 402.2,268.0 411.7,269.6 416.4,275.9 411.7,280.6 400.6,285.4 394.2,290.1 394.2,304.4 393.0,306.8 387.0,309.8 375.2,309.8 361.3,308.8 351.4,302.9 349.0,301.5" fill="#323a5b" />
<polygon points="500.0,446.5 505.9,455.4 511.9,459.3 521.8,457.4 535.6,455.4 545.5,450.4 559.3,448.5 573.2,449.5 583.1,453.4 593.0,457.4 606.8,459.3 618.7,458.4 630.6,454.4 636.5,450.4 634.5,444.5 626.6,438.6 616.7,431.7 606.8,426.7 596.9,422.7 587.0,418.8 575.2,420.8 563.3,425.7 557.4,421.8 549.5,417.8 545.5,414.8 555.4,410.9 551.4,408.9 544.5,408.9 539.6,404.9 529.7,406.9 519.8,414.8 509.9,421.8 507.9,431.7 504.0,437.6" fill="#323a5b" />
<polygon points="570.2,410.9 575.2,406.9 589.0,404.0 604.8,400.0 607.0,401.0 595.0,409.9 593.0,415.8 587.0,419.5 581.1,415.8 573.2,416.8" fill="#323a5b" />
<polygon points="499.0,461.0 505.0,458.5 512.0,460.5 514.0,463.0 508.0,465.0 500.0,464.0" fill="#323a5b" />
<polygon points="668.5,405.0 679.3,403.0 687.3,400.0 681.3,396.0 692.2,389.1 693.2,385.2 699.1,387.1 707.0,385.2 715.0,388.1 716.9,380.2 722.9,383.2 727.8,378.2 732.8,386.2 742.6,385.2 754.5,393.1 763.4,405.0 762.4,416.8 748.6,420.8 744.6,424.7 734.7,422.8 722.9,424.7 728.8,430.7 732.8,436.6 742.6,440.6 741.7,448.5 750.6,454.4 760.5,460.0 754.5,470.0 757.5,475.9 753.5,481.9 754.5,489.8 756.5,497.7 746.6,501.7 730.8,501.7 715.0,496.7 707.0,489.8 703.0,479.9 704.0,470.0 709.0,460.0 703.1,448.5 689.2,438.6 685.3,430.7 677.4,422.8 673.4,412.9" fill="#323a5b" />
<polygon points="697.2,570.9 707.0,564.0 716.9,565.0 722.9,572.9 726.8,582.8 736.7,589.7 748.6,595.6 766.4,597.6 776.3,597.6 782.2,594.6 788.1,604.5 797.0,610.5 808.0,614.0 808.0,626.0 729.0,626.0 724.8,618.0 718.9,606.5 709.0,592.6 701.1,580.8" fill="#323a5b" />
<polygon points="557.0,585.0 566.0,584.0 572.0,590.0 580.0,598.0 588.0,608.0 592.0,618.0 594.0,626.0 573.0,626.0 571.0,618.0 567.0,606.0 561.0,596.0 556.0,588.0" fill="#323a5b" />
<polygon points="548.3,573.2 550.5,574.0 554.5,581.0 558.0,585.5 556.5,588.0 552.0,581.5" fill="#323a5b" />
<polygon points="565.5,585.0 566.5,577.0 568.5,569.0 570.5,569.0 569.5,577.0 568.5,585.5" fill="#323a5b" />
<polygon points="695.0,466.5 699.0,464.5 703.5,465.0 705.0,469.0 700.0,471.5 696.5,470.0" fill="#323a5b" />
<polygon points="338.6,315.7 351.4,311.8 359.3,313.7 359.3,319.7 349.5,325.6 341.5,326.6 338.6,321.7" fill="#498c25" />
<polygon points="326.0,319.0 335.0,319.0 336.0,326.0 329.0,326.0" fill="#498c25" />
<polygon points="420.4,271.1 429.8,270.4 427.5,274.3 422.7,274.3" fill="#498c25" />
<polygon points="406.1,298.8 417.2,293.3 418.0,295.0 410.0,303.6 407.0,304.0" fill="#498c25" />
<polygon points="389.5,309.1 395.8,299.6 396.6,302.8 391.9,311.5" fill="#498c25" />
<polygon points="443.3,290.1 449.6,284.6 454.4,285.4 451.2,288.6 449.6,292.5 444.9,294.9" fill="#498c25" />
<polygon points="545.3,408.7 557.2,409.7 570.2,410.9 573.2,416.8 581.1,415.8 587.0,418.8 575.2,420.8 563.3,425.7 557.4,421.8 549.5,417.8 545.5,414.8" fill="#498c25" />
</g>
<rect x="37" y="165" width="764" height="453" fill="#fff" filter="url(#seatex)" opacity="0.04"/>
<g fill="none" stroke="#fff" stroke-width="1" stroke-linejoin="round">
<polyline points="460.0,181.8 438.0,181.8 430.0,184.8 418.3,194.7 402.4,202.6 382.7,207.5 379.7,213.5 390.6,232.3 386.6,238.2 390.6,245.1 378.7,252.0 353.0,258.0 345.0,263.9 340.1,277.8 345.0,293.6 349.0,301.5 357.0,302.5 361.9,309.4 387.6,309.4"/>
<polyline points="440.0,181.8 460.0,183.0 472.0,183.5 487.0,181.0 498.0,178.5 506.0,182.0 514.0,185.0 522.0,178.0"/>
<polyline points="522.0,178.0 519.0,190.0 516.0,200.0 512.0,210.0 518.0,219.0 526.0,228.0 533.5,233.2 529.5,245.8 526.4,259.3 538.2,269.6 538.2,279.1 533.5,284.6 525.6,281.4 511.4,286.2 498.7,286.2 493.1,290.1 478.1,288.6 467.0,291.7"/>
<polyline points="540.3,331.5 537.4,341.4 537.4,352.3"/>
<polyline points="492.9,290.0 485.9,297.9 484.9,307.8 488.9,314.7 497.8,314.7 509.7,321.7 521.5,316.7 527.5,317.7 530.4,327.6 540.3,331.5"/>
<polyline points="512.6,353.3 537.4,352.9 559.1,350.3 574.0,350.3 577.9,358.2 584.8,366.2 599.7,356.3 614.5,367.2 626.4,370.1 650.1,386.9 650.1,391.9 638.3,397.8 631.3,404.7 632.3,410.7 648.1,417.6 660.0,426.5 680.0,429.5"/>
<polyline points="648.1,417.6 638.3,424.5 618.5,426.5 598.7,423.5"/>
<polyline points="512.6,353.3 513.6,361.2 521.5,371.1 528.5,374.1 526.5,380.0 499.8,395.8 487.9,390.9 480.0,386.3"/>
<polyline points="499.8,395.8 505.7,403.7 505.7,407.7 519.6,414.6"/>
<polyline points="402.9,323.6 402.9,332.5 393.0,341.4 392.0,348.4 396.9,355.3 410.8,361.2 424.6,372.1 438.5,375.1 447.4,381.0 462.2,388.9 468.2,386.0 484.0,387.0 500.0,395.8"/>
<polyline points="447.4,381.0 438.5,387.0 418.7,391.9 407.8,397.8 398.9,406.7 393.0,416.6 383.1,422.5 376.2,426.5"/>
<polyline points="316.8,329.6 325.7,329.6 328.0,326.6"/>
<polyline points="248.0,361.0 249.0,368.0 256.0,373.0 275.0,374.0 283.6,376.3 284.6,385.0 277.0,403.0 281.0,407.0 283.0,414.0"/>
<polyline points="283.0,414.0 285.0,422.0 292.0,432.0 296.0,434.0"/>
<polyline points="283.0,414.0 290.0,415.0 300.0,413.0 310.0,410.0 319.8,406.7 327.7,414.6 337.6,416.6 345.5,408.7 353.4,402.8 361.3,404.7 363.3,412.7"/>
<polyline points="215.0,435.1 222.0,438.0 235.0,439.0 246.0,441.5 260.5,440.5"/>
<polyline points="342.8,534.3 342.8,545.2 332.0,549.1 326.0,556.0 328.0,567.0 324.4,570.9 325.0,596.6 322.0,602.5 327.0,613.4 330.0,616.0"/>
<polyline points="475.6,550.1 474.6,557.0 476.6,574.8 477.6,592.6 479.5,616.0"/>
<polyline points="566.6,551.1 568.6,560.0 571.5,564.0 579.4,559.0 589.3,553.1 595.3,544.2 611.1,533.3 622.9,521.4 637.0,518.5 644.0,511.0 647.0,497.0 653.0,489.0 666.0,481.0"/>
<polyline points="622.9,521.4 626.9,531.3 637.0,538.2 661.0,541.0 664.0,552.0 676.0,565.0 697.0,571.0"/>
<polyline points="581.4,502.6 589.3,494.7 595.3,489.8 607.1,481.9 619.0,482.9 637.0,487.8 650.0,489.0 653.0,489.0"/>
<polyline points="607.1,481.9 611.0,477.0 621.0,472.0 625.0,464.0 632.0,458.0"/>
<polyline points="740.7,384.2 736.7,377.3 740.7,367.4 728.8,349.6 730.8,346.6 739.7,341.7 746.6,329.8 756.5,325.4 772.3,333.7 797.0,336.7"/>
<polyline points="684.0,489.0 684.0,505.0 690.0,515.0 697.0,525.0 697.0,537.0 705.0,541.0 712.0,549.0 717.0,563.0"/>
<polyline points="666.0,481.0 671.0,491.0 684.0,489.0 697.0,487.0 701.0,480.0 704.0,474.0"/>
<polyline points="757.5,475.5 770.0,476.0 782.0,483.0 797.0,488.0"/>
<polyline points="380.0,309.1 387.9,309.1"/>
<polyline points="403.0,324.2 402.2,332.9 395.0,339.2 392.7,347.1"/>
<polyline points="387.9,230.0 390.3,233.2 387.1,237.9 390.3,245.8 380.0,250.6"/>
<polyline points="38.5,217.0 38.5,241.0"/>
<polyline points="797.5,188.0 797.5,262.0"/>
</g>
<rect x="86" y="615" width="486" height="1.5" fill="#fff"/><rect x="592" y="615" width="133" height="1.5" fill="#fff"/><rect x="797" y="262" width="1.2" height="354" fill="#1c2450"/>
<rect x="182" y="310" width="4" height="4" fill="#7a0814"/><rect x="182" y="310" width="3" height="3" fill="#e02834"/>
<rect x="196" y="310" width="4" height="4" fill="#7a0814"/><rect x="196" y="310" width="3" height="3" fill="#e02834"/>
<rect x="207" y="319" width="4" height="4" fill="#7a0814"/><rect x="207" y="319" width="3" height="3" fill="#e02834"/>
<rect x="214" y="330" width="4" height="4" fill="#7a0814"/><rect x="214" y="330" width="3" height="3" fill="#e02834"/>
<rect x="198" y="337" width="4" height="4" fill="#7a0814"/><rect x="198" y="337" width="3" height="3" fill="#e02834"/>
<rect x="167" y="323" width="4" height="4" fill="#7a0814"/><rect x="167" y="323" width="3" height="3" fill="#e02834"/>
<rect x="166" y="337" width="4" height="4" fill="#7a0814"/><rect x="166" y="337" width="3" height="3" fill="#e02834"/>
<rect x="149" y="350" width="4" height="4" fill="#7a0814"/><rect x="149" y="350" width="3" height="3" fill="#e02834"/>
<rect x="219" y="350" width="4" height="4" fill="#7a0814"/><rect x="219" y="350" width="3" height="3" fill="#e02834"/>
<rect x="229" y="354" width="4" height="4" fill="#7a0814"/><rect x="229" y="354" width="3" height="3" fill="#e02834"/>
<rect x="204" y="356" width="4" height="4" fill="#7a0814"/><rect x="204" y="356" width="3" height="3" fill="#e02834"/>
<rect x="196" y="362" width="4" height="4" fill="#7a0814"/><rect x="196" y="362" width="3" height="3" fill="#e02834"/>
<rect x="243" y="362" width="4" height="4" fill="#7a0814"/><rect x="243" y="362" width="3" height="3" fill="#e02834"/>
<rect x="240" y="371" width="4" height="4" fill="#7a0814"/><rect x="240" y="371" width="3" height="3" fill="#e02834"/>
<rect x="253" y="360" width="4" height="4" fill="#7a0814"/><rect x="253" y="360" width="3" height="3" fill="#e02834"/>
<rect x="269" y="350" width="4" height="4" fill="#7a0814"/><rect x="269" y="350" width="3" height="3" fill="#e02834"/>
<rect x="267" y="356" width="4" height="4" fill="#7a0814"/><rect x="267" y="356" width="3" height="3" fill="#e02834"/>
<rect x="266" y="363" width="4" height="4" fill="#7a0814"/><rect x="266" y="363" width="3" height="3" fill="#e02834"/>
<rect x="272" y="359" width="4" height="4" fill="#7a0814"/><rect x="272" y="359" width="3" height="3" fill="#e02834"/>
<rect x="273" y="364" width="4" height="4" fill="#7a0814"/><rect x="273" y="364" width="3" height="3" fill="#e02834"/>
<rect x="279" y="348" width="4" height="4" fill="#7a0814"/><rect x="279" y="348" width="3" height="3" fill="#e02834"/>
<rect x="280" y="362" width="4" height="4" fill="#7a0814"/><rect x="280" y="362" width="3" height="3" fill="#e02834"/>
<rect x="288" y="352" width="4" height="4" fill="#7a0814"/><rect x="288" y="352" width="3" height="3" fill="#e02834"/>
<rect x="288" y="360" width="4" height="4" fill="#7a0814"/><rect x="288" y="360" width="3" height="3" fill="#e02834"/>
<rect x="292" y="338" width="4" height="4" fill="#7a0814"/><rect x="292" y="338" width="3" height="3" fill="#e02834"/>
<rect x="299" y="343" width="4" height="4" fill="#7a0814"/><rect x="299" y="343" width="3" height="3" fill="#e02834"/>
<rect x="297" y="350" width="4" height="4" fill="#7a0814"/><rect x="297" y="350" width="3" height="3" fill="#e02834"/>
<rect x="296" y="358" width="4" height="4" fill="#7a0814"/><rect x="296" y="358" width="3" height="3" fill="#e02834"/>
<rect x="297" y="369" width="4" height="4" fill="#7a0814"/><rect x="297" y="369" width="3" height="3" fill="#e02834"/>
<rect x="286" y="372" width="4" height="4" fill="#7a0814"/><rect x="286" y="372" width="3" height="3" fill="#e02834"/>
<rect x="266" y="379" width="4" height="4" fill="#7a0814"/><rect x="266" y="379" width="3" height="3" fill="#e02834"/>
<rect x="245" y="384" width="4" height="4" fill="#7a0814"/><rect x="245" y="384" width="3" height="3" fill="#e02834"/>
<rect x="202" y="385" width="4" height="4" fill="#7a0814"/><rect x="202" y="385" width="3" height="3" fill="#e02834"/>
<rect x="290" y="385" width="4" height="4" fill="#7a0814"/><rect x="290" y="385" width="3" height="3" fill="#e02834"/>
<rect x="304" y="381" width="4" height="4" fill="#7a0814"/><rect x="304" y="381" width="3" height="3" fill="#e02834"/>
<rect x="307" y="373" width="4" height="4" fill="#7a0814"/><rect x="307" y="373" width="3" height="3" fill="#e02834"/>
<rect x="314" y="364" width="4" height="4" fill="#7a0814"/><rect x="314" y="364" width="3" height="3" fill="#e02834"/>
<rect x="315" y="377" width="4" height="4" fill="#7a0814"/><rect x="315" y="377" width="3" height="3" fill="#e02834"/>
<rect x="310" y="337" width="4" height="4" fill="#7a0814"/><rect x="310" y="337" width="3" height="3" fill="#e02834"/>
<rect x="317" y="348" width="4" height="4" fill="#7a0814"/><rect x="317" y="348" width="3" height="3" fill="#e02834"/>
<rect x="277" y="267" width="4" height="4" fill="#7a0814"/><rect x="277" y="267" width="3" height="3" fill="#e02834"/>
<rect x="297" y="293" width="4" height="4" fill="#7a0814"/><rect x="297" y="293" width="3" height="3" fill="#e02834"/>
<rect x="317" y="301" width="4" height="4" fill="#7a0814"/><rect x="317" y="301" width="3" height="3" fill="#e02834"/>
<rect x="303" y="387" width="4" height="4" fill="#7a0814"/><rect x="303" y="387" width="3" height="3" fill="#e02834"/>
<rect x="425" y="176" width="4" height="4" fill="#7a0814"/><rect x="425" y="176" width="3" height="3" fill="#e02834"/>
<rect x="345" y="222" width="4" height="4" fill="#7a0814"/><rect x="345" y="222" width="3" height="3" fill="#e02834"/>
<rect x="324" y="234" width="4" height="4" fill="#7a0814"/><rect x="324" y="234" width="3" height="3" fill="#e02834"/>
<rect x="331" y="272" width="4" height="4" fill="#7a0814"/><rect x="331" y="272" width="3" height="3" fill="#e02834"/>
<rect x="343" y="292" width="4" height="4" fill="#7a0814"/><rect x="343" y="292" width="3" height="3" fill="#e02834"/>
<rect x="329" y="309" width="4" height="4" fill="#7a0814"/><rect x="329" y="309" width="3" height="3" fill="#e02834"/>
<rect x="355" y="311" width="4" height="4" fill="#7a0814"/><rect x="355" y="311" width="3" height="3" fill="#e02834"/>
<rect x="386" y="277" width="4" height="4" fill="#7a0814"/><rect x="386" y="277" width="3" height="3" fill="#e02834"/>
<rect x="384" y="289" width="4" height="4" fill="#7a0814"/><rect x="384" y="289" width="3" height="3" fill="#e02834"/>
<rect x="407" y="278" width="4" height="4" fill="#7a0814"/><rect x="407" y="278" width="3" height="3" fill="#e02834"/>
<rect x="387" y="304" width="4" height="4" fill="#7a0814"/><rect x="387" y="304" width="3" height="3" fill="#e02834"/>
<rect x="409" y="298" width="4" height="4" fill="#7a0814"/><rect x="409" y="298" width="3" height="3" fill="#e02834"/>
<rect x="432" y="232" width="4" height="4" fill="#7a0814"/><rect x="432" y="232" width="3" height="3" fill="#e02834"/>
<rect x="439" y="270" width="4" height="4" fill="#7a0814"/><rect x="439" y="270" width="3" height="3" fill="#e02834"/>
<rect x="547" y="180" width="4" height="4" fill="#560000"/><rect x="547" y="180" width="3" height="3" fill="#c80c0c"/>
<rect x="472" y="224" width="4" height="4" fill="#560000"/><rect x="472" y="224" width="3" height="3" fill="#c80c0c"/>
<rect x="616" y="227" width="4" height="4" fill="#560000"/><rect x="616" y="227" width="3" height="3" fill="#c80c0c"/>
<rect x="464" y="273" width="4" height="4" fill="#7a0814"/><rect x="464" y="273" width="3" height="3" fill="#e02834"/>
<rect x="465" y="279" width="4" height="4" fill="#7a0814"/><rect x="465" y="279" width="3" height="3" fill="#e02834"/>
<rect x="522" y="274" width="4" height="4" fill="#560000"/><rect x="522" y="274" width="3" height="3" fill="#c80c0c"/>
<rect x="463" y="303" width="4" height="4" fill="#560000"/><rect x="463" y="303" width="3" height="3" fill="#c80c0c"/>
<rect x="495" y="302" width="4" height="4" fill="#560000"/><rect x="495" y="302" width="3" height="3" fill="#c80c0c"/>
<rect x="476" y="312" width="4" height="4" fill="#560000"/><rect x="476" y="312" width="3" height="3" fill="#c80c0c"/>
<rect x="565" y="308" width="4" height="4" fill="#560000"/><rect x="565" y="308" width="3" height="3" fill="#c80c0c"/>
<rect x="622" y="288" width="4" height="4" fill="#560000"/><rect x="622" y="288" width="3" height="3" fill="#c80c0c"/>
<rect x="718" y="275" width="4" height="4" fill="#560000"/><rect x="718" y="275" width="3" height="3" fill="#c80c0c"/>
<rect x="661" y="293" width="4" height="4" fill="#560000"/><rect x="661" y="293" width="3" height="3" fill="#c80c0c"/>
<rect x="313" y="391" width="4" height="4" fill="#7a0814"/><rect x="313" y="391" width="3" height="3" fill="#e02834"/>
<rect x="305" y="399" width="4" height="4" fill="#7a0814"/><rect x="305" y="399" width="3" height="3" fill="#e02834"/>
<rect x="283" y="397" width="4" height="4" fill="#7a0814"/><rect x="283" y="397" width="3" height="3" fill="#e02834"/>
<rect x="268" y="396" width="4" height="4" fill="#7a0814"/><rect x="268" y="396" width="3" height="3" fill="#e02834"/>
<rect x="241" y="392" width="4" height="4" fill="#7a0814"/><rect x="241" y="392" width="3" height="3" fill="#e02834"/>
<rect x="230" y="396" width="4" height="4" fill="#7a0814"/><rect x="230" y="396" width="3" height="3" fill="#e02834"/>
<rect x="211" y="397" width="4" height="4" fill="#7a0814"/><rect x="211" y="397" width="3" height="3" fill="#e02834"/>
<rect x="235" y="411" width="4" height="4" fill="#7a0814"/><rect x="235" y="411" width="3" height="3" fill="#e02834"/>
<rect x="223" y="418" width="4" height="4" fill="#7a0814"/><rect x="223" y="418" width="3" height="3" fill="#e02834"/>
<rect x="270" y="413" width="4" height="4" fill="#7a0814"/><rect x="270" y="413" width="3" height="3" fill="#e02834"/>
<rect x="284" y="414" width="4" height="4" fill="#7a0814"/><rect x="284" y="414" width="3" height="3" fill="#e02834"/>
<rect x="295" y="407" width="4" height="4" fill="#7a0814"/><rect x="295" y="407" width="3" height="3" fill="#e02834"/>
<rect x="303" y="419" width="4" height="4" fill="#7a0814"/><rect x="303" y="419" width="3" height="3" fill="#e02834"/>
<rect x="315" y="415" width="4" height="4" fill="#7a0814"/><rect x="315" y="415" width="3" height="3" fill="#e02834"/>
<rect x="313" y="425" width="4" height="4" fill="#7a0814"/><rect x="313" y="425" width="3" height="3" fill="#e02834"/>
<rect x="298" y="430" width="4" height="4" fill="#7a0814"/><rect x="298" y="430" width="3" height="3" fill="#e02834"/>
<rect x="280" y="434" width="4" height="4" fill="#7a0814"/><rect x="280" y="434" width="3" height="3" fill="#e02834"/>
<rect x="240" y="429" width="4" height="4" fill="#7a0814"/><rect x="240" y="429" width="3" height="3" fill="#e02834"/>
<rect x="149" y="433" width="4" height="4" fill="#560000"/><rect x="149" y="433" width="3" height="3" fill="#c80c0c"/>
<rect x="175" y="435" width="4" height="4" fill="#560000"/><rect x="175" y="435" width="3" height="3" fill="#c80c0c"/>
<rect x="202" y="436" width="4" height="4" fill="#560000"/><rect x="202" y="436" width="3" height="3" fill="#c80c0c"/>
<rect x="220" y="452" width="4" height="4" fill="#560000"/><rect x="220" y="452" width="3" height="3" fill="#c80c0c"/>
<rect x="247" y="452" width="4" height="4" fill="#7a0814"/><rect x="247" y="452" width="3" height="3" fill="#e02834"/>
<rect x="144" y="455" width="4" height="4" fill="#560000"/><rect x="144" y="455" width="3" height="3" fill="#c80c0c"/>
<rect x="165" y="458" width="4" height="4" fill="#560000"/><rect x="165" y="458" width="3" height="3" fill="#c80c0c"/>
<rect x="185" y="467" width="4" height="4" fill="#560000"/><rect x="185" y="467" width="3" height="3" fill="#c80c0c"/>
<rect x="225" y="472" width="4" height="4" fill="#560000"/><rect x="225" y="472" width="3" height="3" fill="#c80c0c"/>
<rect x="142" y="482" width="4" height="4" fill="#560000"/><rect x="142" y="482" width="3" height="3" fill="#c80c0c"/>
<rect x="182" y="488" width="4" height="4" fill="#560000"/><rect x="182" y="488" width="3" height="3" fill="#c80c0c"/>
<rect x="170" y="492" width="4" height="4" fill="#560000"/><rect x="170" y="492" width="3" height="3" fill="#c80c0c"/>
<rect x="146" y="495" width="4" height="4" fill="#560000"/><rect x="146" y="495" width="3" height="3" fill="#c80c0c"/>
<rect x="209" y="496" width="4" height="4" fill="#560000"/><rect x="209" y="496" width="3" height="3" fill="#c80c0c"/>
<rect x="255" y="469" width="4" height="4" fill="#7a0814"/><rect x="255" y="469" width="3" height="3" fill="#e02834"/>
<rect x="286" y="468" width="4" height="4" fill="#7a0814"/><rect x="286" y="468" width="3" height="3" fill="#e02834"/>
<rect x="315" y="441" width="4" height="4" fill="#7a0814"/><rect x="315" y="441" width="3" height="3" fill="#e02834"/>
<rect x="313" y="458" width="4" height="4" fill="#7a0814"/><rect x="313" y="458" width="3" height="3" fill="#e02834"/>
<rect x="317" y="475" width="4" height="4" fill="#7a0814"/><rect x="317" y="475" width="3" height="3" fill="#e02834"/>
<rect x="167" y="501" width="4" height="4" fill="#560000"/><rect x="167" y="501" width="3" height="3" fill="#c80c0c"/>
<rect x="189" y="499" width="4" height="4" fill="#560000"/><rect x="189" y="499" width="3" height="3" fill="#c80c0c"/>
<rect x="169" y="509" width="4" height="4" fill="#560000"/><rect x="169" y="509" width="3" height="3" fill="#c80c0c"/>
<rect x="177" y="510" width="4" height="4" fill="#560000"/><rect x="177" y="510" width="3" height="3" fill="#c80c0c"/>
<rect x="159" y="526" width="4" height="4" fill="#560000"/><rect x="159" y="526" width="3" height="3" fill="#c80c0c"/>
<rect x="214" y="511" width="4" height="4" fill="#7a7000"/><rect x="214" y="511" width="3" height="3" fill="#f4e628"/>
<rect x="359" y="485" width="4" height="4" fill="#7a0814"/><rect x="359" y="485" width="3" height="3" fill="#e02834"/>
<rect x="377" y="485" width="4" height="4" fill="#7a0814"/><rect x="377" y="485" width="3" height="3" fill="#e02834"/>
<rect x="375" y="494" width="4" height="4" fill="#7a0814"/><rect x="375" y="494" width="3" height="3" fill="#e02834"/>
<rect x="369" y="507" width="4" height="4" fill="#560000"/><rect x="369" y="507" width="3" height="3" fill="#c80c0c"/>
<rect x="422" y="471" width="4" height="4" fill="#560000"/><rect x="422" y="471" width="3" height="3" fill="#c80c0c"/>
<rect x="429" y="487" width="4" height="4" fill="#560000"/><rect x="429" y="487" width="3" height="3" fill="#c80c0c"/>
<rect x="430" y="516" width="4" height="4" fill="#560000"/><rect x="430" y="516" width="3" height="3" fill="#c80c0c"/>
<rect x="253" y="499" width="4" height="4" fill="#7a7000"/><rect x="253" y="499" width="3" height="3" fill="#f4e628"/>
<rect x="329" y="497" width="4" height="4" fill="#7a7000"/><rect x="329" y="497" width="3" height="3" fill="#f4e628"/>
<rect x="354" y="536" width="4" height="4" fill="#7a7000"/><rect x="354" y="536" width="3" height="3" fill="#f4e628"/>
<rect x="376" y="541" width="4" height="4" fill="#7a7000"/><rect x="376" y="541" width="3" height="3" fill="#f4e628"/>
<rect x="423" y="545" width="4" height="4" fill="#7a7000"/><rect x="423" y="545" width="3" height="3" fill="#f4e628"/>
<rect x="381" y="565" width="4" height="4" fill="#7a7000"/><rect x="381" y="565" width="3" height="3" fill="#f4e628"/>
<rect x="436" y="477" width="4" height="4" fill="#40409a"/><rect x="436" y="477" width="3" height="3" fill="#8c8cf0"/>
<rect x="459" y="486" width="4" height="4" fill="#40409a"/><rect x="459" y="486" width="3" height="3" fill="#8c8cf0"/>
<rect x="489" y="482" width="4" height="4" fill="#40409a"/><rect x="489" y="482" width="3" height="3" fill="#8c8cf0"/>
<rect x="500" y="505" width="4" height="4" fill="#40409a"/><rect x="500" y="505" width="3" height="3" fill="#8c8cf0"/>
<rect x="541" y="469" width="4" height="4" fill="#40409a"/><rect x="541" y="469" width="3" height="3" fill="#8c8cf0"/>
<rect x="553" y="514" width="4" height="4" fill="#40409a"/><rect x="553" y="514" width="3" height="3" fill="#8c8cf0"/>
<rect x="572" y="496" width="4" height="4" fill="#40409a"/><rect x="572" y="496" width="3" height="3" fill="#8c8cf0"/>
<rect x="583" y="500" width="4" height="4" fill="#40409a"/><rect x="583" y="500" width="3" height="3" fill="#8c8cf0"/>
<rect x="595" y="500" width="4" height="4" fill="#40409a"/><rect x="595" y="500" width="3" height="3" fill="#8c8cf0"/>
<rect x="579" y="512" width="4" height="4" fill="#40409a"/><rect x="579" y="512" width="3" height="3" fill="#8c8cf0"/>
<rect x="587" y="517" width="4" height="4" fill="#40409a"/><rect x="587" y="517" width="3" height="3" fill="#8c8cf0"/>
<rect x="580" y="542" width="4" height="4" fill="#40409a"/><rect x="580" y="542" width="3" height="3" fill="#8c8cf0"/>
<rect x="569" y="548" width="4" height="4" fill="#40409a"/><rect x="569" y="548" width="3" height="3" fill="#8c8cf0"/>
<rect x="606" y="541" width="4" height="4" fill="#40409a"/><rect x="606" y="541" width="3" height="3" fill="#8c8cf0"/>
<rect x="582" y="594" width="4" height="4" fill="#40409a"/><rect x="582" y="594" width="3" height="3" fill="#8c8cf0"/>
<rect x="478" y="513" width="4" height="4" fill="#560000"/><rect x="478" y="513" width="3" height="3" fill="#c80c0c"/>
<rect x="521" y="554" width="4" height="4" fill="#7a7000"/><rect x="521" y="554" width="3" height="3" fill="#f4e628"/>
<rect x="532" y="565" width="4" height="4" fill="#7a7000"/><rect x="532" y="565" width="3" height="3" fill="#f4e628"/>
<rect x="545" y="565" width="4" height="4" fill="#7a7000"/><rect x="545" y="565" width="3" height="3" fill="#f4e628"/>
<rect x="693" y="500" width="4" height="4" fill="#560000"/><rect x="693" y="500" width="3" height="3" fill="#c80c0c"/>
<rect x="733" y="540" width="4" height="4" fill="#560000"/><rect x="733" y="540" width="3" height="3" fill="#c80c0c"/>
<rect x="749" y="570" width="4" height="4" fill="#560000"/><rect x="749" y="570" width="3" height="3" fill="#c80c0c"/>
<rect x="778" y="591" width="4" height="4" fill="#560000"/><rect x="778" y="591" width="3" height="3" fill="#c80c0c"/>
<rect x="760" y="508" width="4" height="4" fill="#560000"/><rect x="760" y="508" width="3" height="3" fill="#c80c0c"/>
<rect x="788" y="499" width="4" height="4" fill="#560000"/><rect x="788" y="499" width="3" height="3" fill="#c80c0c"/>
<rect x="636" y="469" width="4" height="4" fill="#40409a"/><rect x="636" y="469" width="3" height="3" fill="#8c8cf0"/>
<rect x="651" y="495" width="4" height="4" fill="#40409a"/><rect x="651" y="495" width="3" height="3" fill="#8c8cf0"/>
<rect x="662" y="532" width="4" height="4" fill="#40409a"/><rect x="662" y="532" width="3" height="3" fill="#8c8cf0"/>
<rect x="698" y="564" width="4" height="4" fill="#40409a"/><rect x="698" y="564" width="3" height="3" fill="#8c8cf0"/>
<rect x="693" y="575" width="4" height="4" fill="#40409a"/><rect x="693" y="575" width="3" height="3" fill="#8c8cf0"/>
<rect x="675" y="607" width="4" height="4" fill="#40409a"/><rect x="675" y="607" width="3" height="3" fill="#8c8cf0"/>
<rect x="331" y="317" width="4" height="4" fill="#7a0814"/><rect x="331" y="317" width="3" height="3" fill="#e02834"/>
<rect x="350" y="316" width="4" height="4" fill="#7a0814"/><rect x="350" y="316" width="3" height="3" fill="#e02834"/>
<rect x="325" y="330" width="4" height="4" fill="#7a0814"/><rect x="325" y="330" width="3" height="3" fill="#e02834"/>
<rect x="334" y="331" width="4" height="4" fill="#7a0814"/><rect x="334" y="331" width="3" height="3" fill="#e02834"/>
<rect x="368" y="333" width="4" height="4" fill="#7a0814"/><rect x="368" y="333" width="3" height="3" fill="#e02834"/>
<rect x="344" y="349" width="4" height="4" fill="#7a0814"/><rect x="344" y="349" width="3" height="3" fill="#e02834"/>
<rect x="361" y="346" width="4" height="4" fill="#7a0814"/><rect x="361" y="346" width="3" height="3" fill="#e02834"/>
<rect x="330" y="354" width="4" height="4" fill="#7a0814"/><rect x="330" y="354" width="3" height="3" fill="#e02834"/>
<rect x="343" y="358" width="4" height="4" fill="#7a0814"/><rect x="343" y="358" width="3" height="3" fill="#e02834"/>
<rect x="354" y="360" width="4" height="4" fill="#7a0814"/><rect x="354" y="360" width="3" height="3" fill="#e02834"/>
<rect x="335" y="368" width="4" height="4" fill="#7a0814"/><rect x="335" y="368" width="3" height="3" fill="#e02834"/>
<rect x="341" y="374" width="4" height="4" fill="#7a0814"/><rect x="341" y="374" width="3" height="3" fill="#e02834"/>
<rect x="319" y="382" width="4" height="4" fill="#7a0814"/><rect x="319" y="382" width="3" height="3" fill="#e02834"/>
<rect x="337" y="386" width="4" height="4" fill="#7a0814"/><rect x="337" y="386" width="3" height="3" fill="#e02834"/>
<rect x="369" y="371" width="4" height="4" fill="#7a0814"/><rect x="369" y="371" width="3" height="3" fill="#e02834"/>
<rect x="387" y="359" width="4" height="4" fill="#7a0814"/><rect x="387" y="359" width="3" height="3" fill="#e02834"/>
<rect x="387" y="376" width="4" height="4" fill="#7a0814"/><rect x="387" y="376" width="3" height="3" fill="#e02834"/>
<rect x="398" y="386" width="4" height="4" fill="#560000"/><rect x="398" y="386" width="3" height="3" fill="#c80c0c"/>
<rect x="397" y="397" width="4" height="4" fill="#560000"/><rect x="397" y="397" width="3" height="3" fill="#c80c0c"/>
<rect x="355" y="393" width="4" height="4" fill="#7a0814"/><rect x="355" y="393" width="3" height="3" fill="#e02834"/>
<rect x="343" y="395" width="4" height="4" fill="#7a0814"/><rect x="343" y="395" width="3" height="3" fill="#e02834"/>
<rect x="375" y="395" width="4" height="4" fill="#7a0814"/><rect x="375" y="395" width="3" height="3" fill="#e02834"/>
<rect x="365" y="401" width="4" height="4" fill="#7a0814"/><rect x="365" y="401" width="3" height="3" fill="#e02834"/>
<rect x="318" y="402" width="4" height="4" fill="#7a0814"/><rect x="318" y="402" width="3" height="3" fill="#e02834"/>
<rect x="329" y="403" width="4" height="4" fill="#7a0814"/><rect x="329" y="403" width="3" height="3" fill="#e02834"/>
<rect x="374" y="407" width="4" height="4" fill="#7a0814"/><rect x="374" y="407" width="3" height="3" fill="#e02834"/>
<rect x="348" y="413" width="4" height="4" fill="#7a0814"/><rect x="348" y="413" width="3" height="3" fill="#e02834"/>
<rect x="368" y="414" width="4" height="4" fill="#7a0814"/><rect x="368" y="414" width="3" height="3" fill="#e02834"/>
<rect x="381" y="416" width="4" height="4" fill="#7a0814"/><rect x="381" y="416" width="3" height="3" fill="#e02834"/>
<rect x="328" y="421" width="4" height="4" fill="#7a0814"/><rect x="328" y="421" width="3" height="3" fill="#e02834"/>
<rect x="340" y="420" width="4" height="4" fill="#7a0814"/><rect x="340" y="420" width="3" height="3" fill="#e02834"/>
<rect x="347" y="421" width="4" height="4" fill="#7a0814"/><rect x="347" y="421" width="3" height="3" fill="#e02834"/>
<rect x="344" y="428" width="4" height="4" fill="#7a0814"/><rect x="344" y="428" width="3" height="3" fill="#e02834"/>
<rect x="332" y="432" width="4" height="4" fill="#7a0814"/><rect x="332" y="432" width="3" height="3" fill="#e02834"/>
<rect x="382" y="432" width="4" height="4" fill="#7a0814"/><rect x="382" y="432" width="3" height="3" fill="#e02834"/>
<rect x="435" y="323" width="4" height="4" fill="#7a0814"/><rect x="435" y="323" width="3" height="3" fill="#e02834"/>
<rect x="413" y="328" width="4" height="4" fill="#560000"/><rect x="413" y="328" width="3" height="3" fill="#c80c0c"/>
<rect x="399" y="343" width="4" height="4" fill="#560000"/><rect x="399" y="343" width="3" height="3" fill="#c80c0c"/>
<rect x="436" y="342" width="4" height="4" fill="#560000"/><rect x="436" y="342" width="3" height="3" fill="#c80c0c"/>
<rect x="426" y="365" width="4" height="4" fill="#560000"/><rect x="426" y="365" width="3" height="3" fill="#c80c0c"/>
<rect x="437" y="379" width="4" height="4" fill="#560000"/><rect x="437" y="379" width="3" height="3" fill="#c80c0c"/>
<rect x="461" y="364" width="4" height="4" fill="#560000"/><rect x="461" y="364" width="3" height="3" fill="#c80c0c"/>
<rect x="490" y="371" width="4" height="4" fill="#560000"/><rect x="490" y="371" width="3" height="3" fill="#c80c0c"/>
<rect x="496" y="324" width="4" height="4" fill="#560000"/><rect x="496" y="324" width="3" height="3" fill="#c80c0c"/>
<rect x="331" y="437" width="4" height="4" fill="#7a0814"/><rect x="331" y="437" width="3" height="3" fill="#e02834"/>
<rect x="343" y="437" width="4" height="4" fill="#7a0814"/><rect x="343" y="437" width="3" height="3" fill="#e02834"/>
<rect x="396" y="438" width="4" height="4" fill="#560000"/><rect x="396" y="438" width="3" height="3" fill="#c80c0c"/>
<rect x="414" y="403" width="4" height="4" fill="#40409a"/><rect x="414" y="403" width="3" height="3" fill="#8c8cf0"/>
<rect x="434" y="407" width="4" height="4" fill="#40409a"/><rect x="434" y="407" width="3" height="3" fill="#8c8cf0"/>
<rect x="404" y="418" width="4" height="4" fill="#40409a"/><rect x="404" y="418" width="3" height="3" fill="#8c8cf0"/>
<rect x="439" y="421" width="4" height="4" fill="#40409a"/><rect x="439" y="421" width="3" height="3" fill="#8c8cf0"/>
<rect x="430" y="429" width="4" height="4" fill="#40409a"/><rect x="430" y="429" width="3" height="3" fill="#8c8cf0"/>
<rect x="416" y="433" width="4" height="4" fill="#40409a"/><rect x="416" y="433" width="3" height="3" fill="#8c8cf0"/>
<rect x="483" y="423" width="4" height="4" fill="#40409a"/><rect x="483" y="423" width="3" height="3" fill="#8c8cf0"/>
<rect x="487" y="430" width="4" height="4" fill="#40409a"/><rect x="487" y="430" width="3" height="3" fill="#8c8cf0"/>
<rect x="455" y="436" width="4" height="4" fill="#40409a"/><rect x="455" y="436" width="3" height="3" fill="#8c8cf0"/>
<rect x="449" y="400" width="4" height="4" fill="#7a7000"/><rect x="449" y="400" width="3" height="3" fill="#f4e628"/>
<rect x="484" y="395" width="4" height="4" fill="#7a7000"/><rect x="484" y="395" width="3" height="3" fill="#f4e628"/>
<rect x="471" y="411" width="4" height="4" fill="#7a7000"/><rect x="471" y="411" width="3" height="3" fill="#f4e628"/>
<rect x="521" y="324" width="4" height="4" fill="#560000"/><rect x="521" y="324" width="3" height="3" fill="#c80c0c"/>
<rect x="566" y="327" width="4" height="4" fill="#560000"/><rect x="566" y="327" width="3" height="3" fill="#c80c0c"/>
<rect x="548" y="348" width="4" height="4" fill="#560000"/><rect x="548" y="348" width="3" height="3" fill="#c80c0c"/>
<rect x="507" y="359" width="4" height="4" fill="#560000"/><rect x="507" y="359" width="3" height="3" fill="#c80c0c"/>
<rect x="550" y="377" width="4" height="4" fill="#560000"/><rect x="550" y="377" width="3" height="3" fill="#c80c0c"/>
<rect x="651" y="335" width="4" height="4" fill="#560000"/><rect x="651" y="335" width="3" height="3" fill="#c80c0c"/>
<rect x="635" y="363" width="4" height="4" fill="#560000"/><rect x="635" y="363" width="3" height="3" fill="#c80c0c"/>
<rect x="669" y="393" width="4" height="4" fill="#560000"/><rect x="669" y="393" width="3" height="3" fill="#c80c0c"/>
<rect x="579" y="390" width="4" height="4" fill="#7a7000"/><rect x="579" y="390" width="3" height="3" fill="#f4e628"/>
<rect x="606" y="399" width="4" height="4" fill="#7a7000"/><rect x="606" y="399" width="3" height="3" fill="#f4e628"/>
<rect x="555" y="419" width="4" height="4" fill="#7a7000"/><rect x="555" y="419" width="3" height="3" fill="#f4e628"/>
<rect x="582" y="416" width="4" height="4" fill="#7a7000"/><rect x="582" y="416" width="3" height="3" fill="#f4e628"/>
<rect x="510" y="418" width="4" height="4" fill="#40409a"/><rect x="510" y="418" width="3" height="3" fill="#8c8cf0"/>
<rect x="500" y="432" width="4" height="4" fill="#40409a"/><rect x="500" y="432" width="3" height="3" fill="#8c8cf0"/>
<rect x="688" y="313" width="4" height="4" fill="#560000"/><rect x="688" y="313" width="3" height="3" fill="#c80c0c"/>
<rect x="639" y="446" width="4" height="4" fill="#40409a"/><rect x="639" y="446" width="3" height="3" fill="#8c8cf0"/>
<rect x="663" y="451" width="4" height="4" fill="#40409a"/><rect x="663" y="451" width="3" height="3" fill="#8c8cf0"/>
<rect x="357" y="454" width="4" height="4" fill="#7a0814"/><rect x="357" y="454" width="3" height="3" fill="#e02834"/>
<rect x="388" y="455" width="4" height="4" fill="#7a0814"/><rect x="388" y="455" width="3" height="3" fill="#e02834"/>
<rect x="371" y="461" width="4" height="4" fill="#7a0814"/><rect x="371" y="461" width="3" height="3" fill="#e02834"/>
<rect x="381" y="460" width="4" height="4" fill="#7a0814"/><rect x="381" y="460" width="3" height="3" fill="#e02834"/>
<rect x="394" y="463" width="4" height="4" fill="#560000"/><rect x="394" y="463" width="3" height="3" fill="#c80c0c"/>
<rect x="409" y="440" width="4" height="4" fill="#40409a"/><rect x="409" y="440" width="3" height="3" fill="#8c8cf0"/>
<rect x="444" y="447" width="4" height="4" fill="#40409a"/><rect x="444" y="447" width="3" height="3" fill="#8c8cf0"/>
<rect x="439" y="458" width="4" height="4" fill="#40409a"/><rect x="439" y="458" width="3" height="3" fill="#8c8cf0"/>
<rect x="453" y="463" width="4" height="4" fill="#40409a"/><rect x="453" y="463" width="3" height="3" fill="#8c8cf0"/>
<rect x="470" y="444" width="4" height="4" fill="#40409a"/><rect x="470" y="444" width="3" height="3" fill="#8c8cf0"/>
<rect x="487" y="450" width="4" height="4" fill="#40409a"/><rect x="487" y="450" width="3" height="3" fill="#8c8cf0"/>
<rect x="510" y="456" width="4" height="4" fill="#40409a"/><rect x="510" y="456" width="3" height="3" fill="#8c8cf0"/>
<rect x="613" y="456" width="4" height="4" fill="#40409a"/><rect x="613" y="456" width="3" height="3" fill="#8c8cf0"/>
<rect x="658" y="466" width="4" height="4" fill="#40409a"/><rect x="658" y="466" width="3" height="3" fill="#8c8cf0"/>
<rect x="38" y="231" width="4" height="4" fill="#7a0814"/><rect x="38" y="231" width="3" height="3" fill="#e02834"/>
<path d="M669.5 349.5 v16 l3.7 -3.6 l2.6 6 l2 -0.9 l-2.6 -5.9 h5.3 z" fill="#fff" stroke="#000" stroke-width="1" stroke-linejoin="miter"/>
<rect x="37.5" y="165.5" width="762" height="452" fill="none" stroke="#000" stroke-width="1"/>
</svg>
<div id="name" class="abs sunk"><span class="k">オスマン</span>帝国</div>
<div id="b1" class="abs btn">勢力解説</div>
<div id="info" class="abs sunk">
<div style="top:5px">当主　<span class="k">オスマン</span><span class="n">2</span>世</div>
<div style="top:25px">収穫高　<span class="n">345</span>万<span class="n">8474</span><span class="tn">トン</span></div>
<div style="top:45px">城数　<span class="n">44</span></div>
<div style="top:65px">資金　<span class="n">1207495</span></div>
<div style="top:97px">航海技術　<span class="n">0</span></div>
<div style="top:117px">鉱山技術　<span class="n">0</span></div>
<div style="top:149px">従属勢力数　<span class="n">5</span></div>
<div style="top:169px">臣従勢力数　<span class="n">0</span></div>
</div>
<div id="b2" class="abs btn">将軍一覧</div>
<div id="b3" class="abs btn">閉<span style="letter-spacing:-2px">じる</span></div>
</body></html>
